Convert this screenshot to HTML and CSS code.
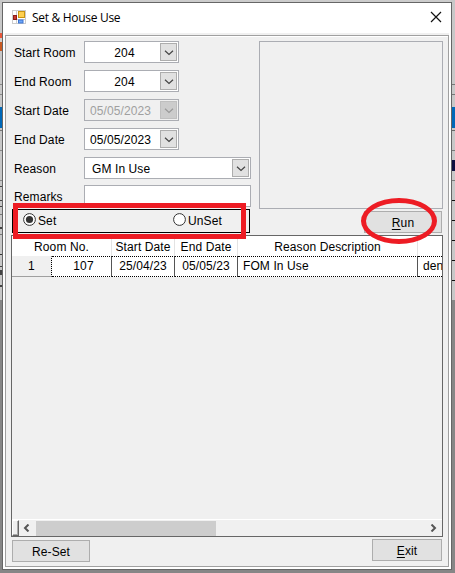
FILE: index.html
```
<!DOCTYPE html>
<html lang="en">
<head>
<meta charset="utf-8">
<title>Set &amp; House Use</title>
<link rel="stylesheet" href="styles.css">
</head>
<body>
<svg width="0" height="0" class="defs"><defs>
<symbol id="chev" viewBox="0 0 10 6"><path d="M1 .8 5 4.5 9 .8" fill="none" stroke="currentColor" stroke-width="1.2"/></symbol>
</defs></svg>
<main class="window">
  <header class="title">
    <svg class="app" width="14" height="14" viewBox="0 0 14 14"><rect x=".5" y=".5" width="13" height="13" fill="#fff" stroke="#ccc"/><path d="M4.5 0v14M0 9.5h14" stroke="#ccc"/><rect x="6.5" y="1.5" width="6" height="6" fill="#ffd050" stroke="#c99412"/><rect x="1.5" y="5.5" width="3" height="4" fill="#c93b2e" stroke="#8d1d17"/><rect x="6.500" y="10" width="4.500" height="3" fill="#6ca6f8" stroke="#3c73d1"/></svg>
    <h1>Set &amp; House Use</h1>
    <svg class="close" width="12" height="12" viewBox="0 0 12 12"><path d="M1 1 11 11M11 1 1 11" stroke="#111" stroke-width="1.2"/></svg>
  </header>
  <div class="body">
    <div class="top">
      <div class="left">
        <div class="row"><label>Start Room</label><div class="field mid"><span>204</span><i><svg width="10" height="6"><use href="#chev"/></svg></i></div></div>
        <div class="row"><label>End Room</label><div class="field mid"><span>204</span><i><svg width="10" height="6"><use href="#chev"/></svg></i></div></div>
        <div class="row"><label>Start Date</label><div class="field off"><span>05/05/2023</span><i><svg width="10" height="6"><use href="#chev"/></svg></i></div></div>
        <div class="row"><label>End Date</label><div class="field"><span>05/05/2023</span><i><svg width="10" height="6"><use href="#chev"/></svg></i></div></div>
        <div class="row last"><label>Reason</label><div class="field wide"><span>GM In Use</span><i><svg width="10" height="6"><use href="#chev"/></svg></i></div></div>
        <div class="row end"><label>Remarks</label><div class="field wide"></div></div>
        <div class="modes">
          <div class="opt"><svg width="13" height="13" viewBox="0 0 13 13"><circle cx="6.500" cy="6.500" r="5.900" fill="#fff" stroke="#333"/><circle cx="6.500" cy="6.500" r="3.600" fill="#333"/></svg>Set</div>
          <div class="opt"><svg width="13" height="13" viewBox="0 0 13 13"><circle cx="6.500" cy="6.500" r="5.900" fill="#fff" stroke="#333"/></svg>UnSet</div>
          <div class="mark-box"></div>
        </div>
      </div>
      <div class="right">
        <div class="preview"></div>
        <div class="btn run"><span><u>R</u>un</span><div class="mark-oval"></div></div>
      </div>
    </div>
    <section class="table">
      <div class="thead"><b>Room No.</b><b>Start Date</b><b>End Date</b><b>Reason Description</b><b></b></div>
      <div class="trow"><b class="num">1</b><b class="room">107</b><b>25/04/23</b><b>05/05/23</b><b class="txt">FOM In Use</b><b class="txt">den</b></div>
      <div class="space"></div>
      <div class="scroll"><div class="split"></div>
        <svg class="arr" width="7" height="8" viewBox="0 0 7 8"><path d="M5.500 .5 2 4l3.500 3.500" fill="none" stroke="#555" stroke-width="2"/></svg>
        <div class="thumb"></div>
        <svg class="arr far" width="7" height="8" viewBox="0 0 7 8"><path d="M1.500 .5 5 4 1.500 7.500" fill="none" stroke="#555" stroke-width="2"/></svg>
      </div>
    </section>
    <footer><div class="btn reset">Re-Set</div><div class="btn exit"><span><u>E</u>xit</span></div></footer>
  </div>
</main>
</body>
</html>
```
FILE: styles.css
```
* { box-sizing: border-box; }
html, body { margin: 0; height: 100%; overflow: hidden; }
body {
  padding: 2px 0 0 2px;
  font: 12px/14px "Liberation Sans", Arial, sans-serif;
  letter-spacing: .1px;
  color: #000;
  background:
    linear-gradient(#c8c8c8 0 33px, #e8573a 33px 38px, #d5d0cc 38px 42px, #c95a22 42px 51px, #c8c8c8 51px 84px, #888 84px 85px, #c8c8c8 85px 94px, #888 94px 95px, #c8c8c8 95px 107px, #0068b8 107px 128px, #c8c8c8 128px 130px, #777 130px 131px, #c8c8c8 131px 150px, #888 150px 151px, #c8c8c8 151px 180px, #888 180px 181px, #c8c8c8 181px 186px, #444 186px 187px, #c8c8c8 187px 200px, #444 200px 201px, #c8c8c8 201px 206px, #444 206px 207px, #c8c8c8 207px 214px, #777 214px 215px, #c8c8c8 215px 227px, #444 227px 229px, #c8c8c8 229px 234px, #777 234px 235px, #c8c8c8 235px 254px, #333 254px 255px, #c8c8c8 255px 266px, #444 266px 267px, #c8c8c8 267px 270px, #444 270px 275px, #c8c8c8 275px 285px, #444 285px 287px, #c8c8c8 287px 300px, #868686 300px) 0 0 / 3px 100% no-repeat,
    linear-gradient(#c8c8c8 0 84px, #777 84px 85px, #c8c8c8 85px 94px, #777 94px 95px, #c8c8c8 95px 107px, #0068b8 107px 128px, #c8c8c8 128px 130px, #666 130px 131px, #c8c8c8 131px 150px, #777 150px 151px, #c8c8c8 151px 160px, #101040 160px 171px, #c8c8c8 171px 180px, #777 180px 181px, #c8c8c8 181px 200px, #111 200px 201px, #c8c8c8 201px 220px, #111 220px 221px, #c8c8c8 221px 240px, #111 240px 241px, #c8c8c8 241px 260px, #111 260px 261px, #c8c8c8 261px 280px, #111 280px 281px, #c8c8c8 281px 300px, #868686 300px) 100% 0 / 4px 100% no-repeat,
    linear-gradient(#ccc 0 3px, #868686 3px);
}
.defs { position: absolute; }
.window { width: 450px; height: 568px; padding: 0 2px 2px; border: 1px solid #666; background: #fff; }
.title { display: flex; align-items: center; height: 30px; padding: 0 8px 0 7px; }
.title h1 { margin: 0 auto 0 6px; padding-bottom: 1px; font: 12px/16px "Open Sans", "Noto Sans", sans-serif; letter-spacing: -.3px; }
.app { margin-top: -2px; }
.close { margin-right: -1px; margin-top: -2px; }
.body { display: flex; flex-direction: column; height: 532px; margin-top: 2px; padding: 5px 5px 4px; border: 1px solid #a0a0a0; background: #f0f0f0; box-shadow: inset 0 1px #fff, 0 -2px #f0f0f0; }
.top { display: flex; justify-content: space-between; height: 194px; }
.left { width: 240px; padding-left: 1px; }
.row { display: flex; align-items: center; height: 22px; margin-bottom: 7px; }
.row label { width: 72px; padding-left: 2px; white-space: nowrap; padding-top: 2px; }
.row.last { margin-bottom: 6px; }
.row.end { margin-bottom: 2px; }
.field { display: flex; align-items: center; width: 95px; height: 22px; border: 1px solid #abadb3; background: #fff; padding: 1px 1px 1px 5px; white-space: nowrap; }
.field span { flex: 1; padding-top: 1px; }
.field.mid span { text-align: center; padding-right: 1px; }
.field i { display: flex; align-items: center; justify-content: center; width: 17px; height: 18px; border: 1px solid #adadad; background: #e1e1e1; color: #444; padding-top: 1px; }
.field.wide { flex: none; width: 167px; padding-left: 7px; }
.field.off { background: #f0f0f0; color: #a0a0a0; }
.field.off i { background: #ccc; border-color: #bfbfbf; color: #999; }
.modes { position: relative; display: flex; width: 238px; height: 24px; border: 1px solid #000; padding: 3px 0 0 10px; }
.opt { display: flex; flex: none; width: 150px; height: 15px; gap: 2px; line-height: 17px; }
.opt + .opt { width: 70px; }
.mark-box { position: absolute; left: 0; top: -7px; width: 233px; height: 36px; border: 5px solid #ed1c24; }
.right { display: flex; flex-direction: column; width: 184px; }
.preview { height: 168px; border: 1px solid #abadb3; }
.btn { display: flex; align-items: center; justify-content: center; height: 22px; border: 1px solid #adadad; background: #e1e1e1; padding-top: 2px; }
.btn u { text-underline-offset: 2px; text-decoration-skip-ink: none; }
.run { position: relative; width: 78px; margin: 2px 1px 0 auto; }
.mark-oval { position: absolute; left: -4px; top: -14px; width: 76px; height: 46px; border: 5px solid #ed1c24; border-radius: 50%; }
.table { display: flex; flex-direction: column; width: 432px; height: 302px; border: 1px solid #666; overflow: hidden; }
.thead, .trow { display: grid; background: #fff; }
.table b { font-weight: normal; text-align: center; white-space: nowrap; overflow: hidden; }
.thead { grid-template-columns: 100px 63px 63px 180px 24px; height: 20px; line-height: 22px; }
.thead b { border-right: 1px solid #e3e3e3; }
.trow { grid-template-columns: 40px 60px 63px 63px 180px 24px; height: 21px; line-height: 19px; }
.trow b { border-right: 1px solid #555; border-top: 1px dotted #000; border-bottom: 1px dotted #000; }
.trow b.num { background: #f0f0f0; border-right: 1px dotted #000; border-top: 1px solid #f0f0f0; border-bottom: 1px solid #a0a0a0; }
.trow b.room { padding-left: 4px; }
.trow b.txt { text-align: left; padding-left: 5px; }
.table b:last-child { border-right: 0; }
.space { flex: 1; }
.scroll { display: flex; align-items: center; height: 17px; border-top: 1px solid #fff; }
.split { width: 7px; height: 16px; border: 1px solid #fff; border-right: 1px solid #666; border-bottom-color: #666; box-shadow: inset -1px -1px #aaa; }
.arr { margin-left: 4px; }
.thumb { width: 180px; height: 15px; margin-left: 6px; background: #cdcdcd; }
.arr.far { margin: 0 5px 0 auto; }
footer { display: flex; justify-content: space-between; padding: 2px 1px 0; }
.reset { width: 78px; margin-top: 1px; }
.exit { width: 70px; }
```
